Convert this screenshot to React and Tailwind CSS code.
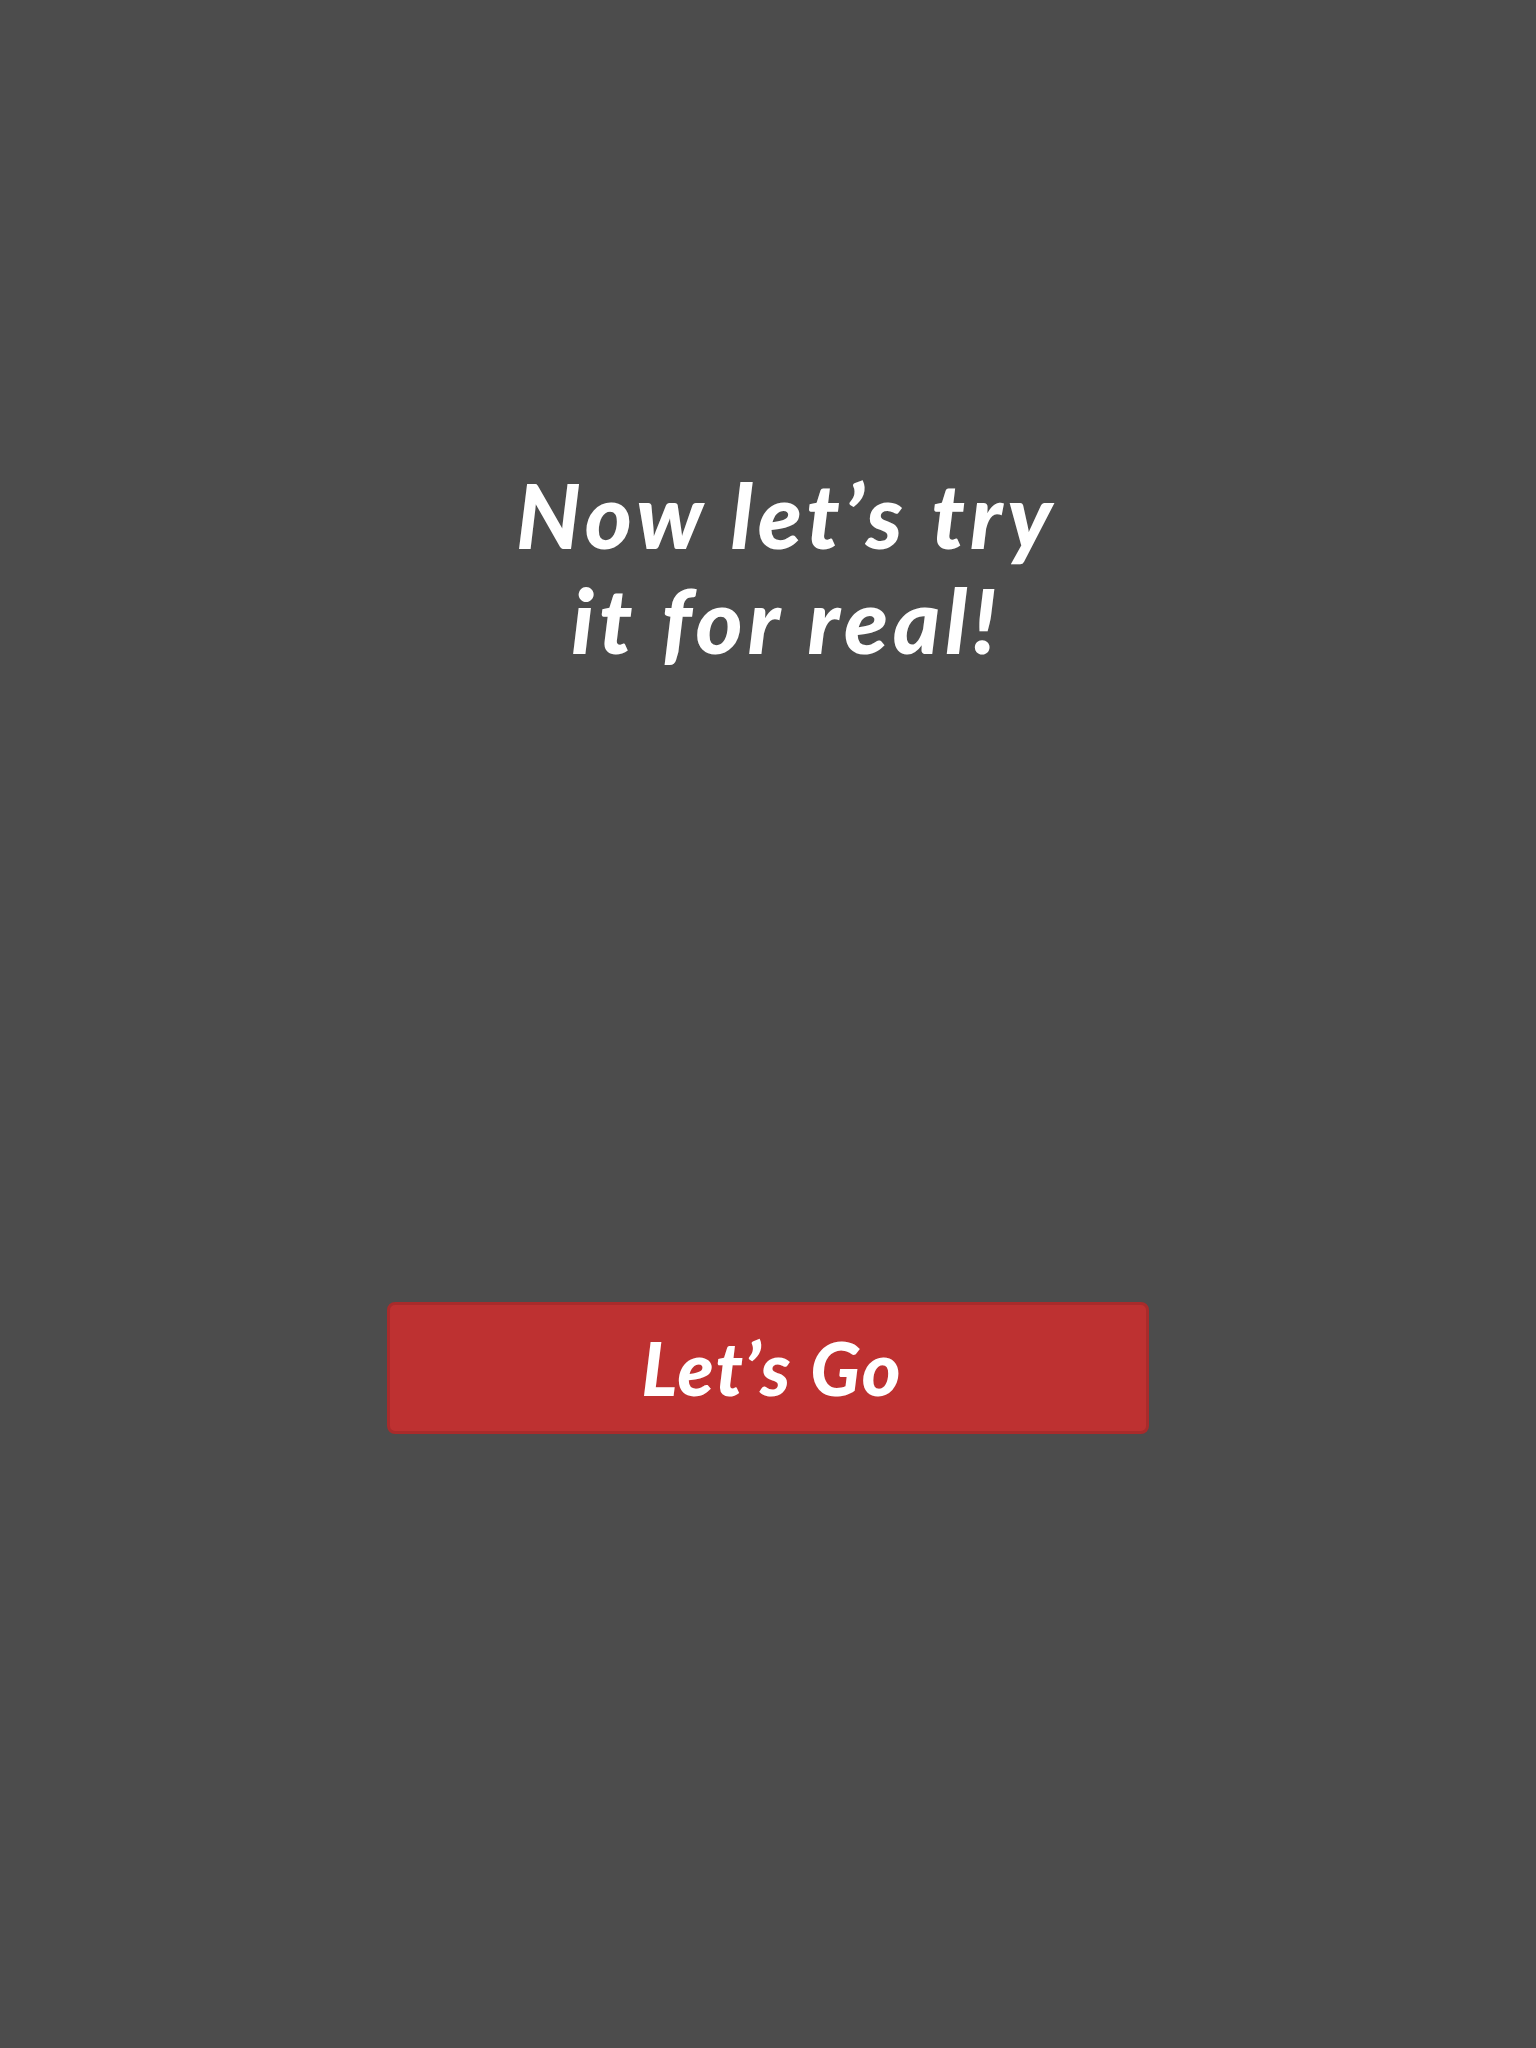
export default function App() {
  return (
    <div className="min-h-[2048px] w-full bg-[#4c4c4c] flex flex-col items-center" style={{ fontFamily: 'Lato, "Open Sans", sans-serif' }}>
      {/* Heading */}
      <div className="pt-[462px] pl-[37px] text-center">
        <h1 className="text-[90px] leading-[105px] font-black italic tracking-[5px] text-white">
          Now let’s try
          <br />
          it for real!
        </h1>
      </div>

      {/* Button */}
      <button className="mt-[630px] w-[762px] h-[132px] pl-[8px] bg-[#be3131] border-[3px] border-[#a92b2b] rounded-[8px] text-white text-[74px] font-black italic tracking-[2px] leading-none">
        Let’s Go
      </button>
    </div>
  )
}
